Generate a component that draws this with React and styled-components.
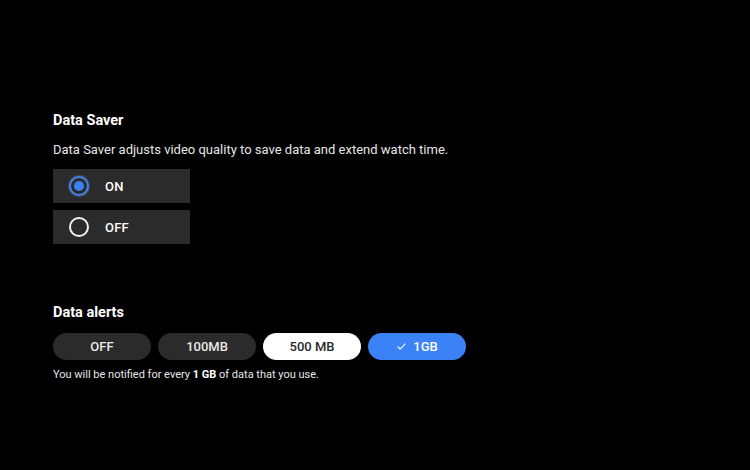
import React, { useState } from "react";
import styled, { createGlobalStyle } from "styled-components";

const Global = createGlobalStyle`
  html, body { margin: 0; padding: 0; background: #000; }
  body { font-family: Roboto, "Noto Sans", Arial, sans-serif; color: #fff; }
`;

const Page = styled.div`
  width: 750px;
  height: 470px;
  background: #000;
  box-sizing: border-box;
  padding: 112px 53px 0;
  display: flex;
  flex-direction: column;
`;

const Section = styled.section`
  display: flex;
  flex-direction: column;
  margin-bottom: ${(p) => p.$after || 0}px;
`;

const Title = styled.h2`
  margin: 0 0 ${(p) => p.$gap ?? 12}px;
  font-size: 14.5px;
  font-weight: 700;
  line-height: 18px;
  color: #fff;
`;

const Description = styled.p`
  margin: 0 0 11px;
  font-size: 13px;
  line-height: 16px;
  color: #e6e6e6;
`;

const RadioList = styled.div`
  display: flex;
  flex-direction: column;
  gap: 7px;
`;

const RadioRow = styled.button`
  width: 137px;
  height: 34px;
  display: flex;
  align-items: center;
  gap: 16px;
  padding: 0 0 0 16px;
  border: none;
  background: #2b2b2b;
  color: #fff;
  font-family: inherit;
  font-size: 13px;
  font-weight: 500;
  letter-spacing: 0.2px;
  cursor: pointer;
  text-align: left;
`;

const RadioDot = styled.span`
  width: 20px;
  height: 20px;
  box-sizing: border-box;
  border-radius: 50%;
  border: 2px solid ${(p) => (p.$on ? "#4a86e8" : "#f2f2f2")};
  display: flex;
  align-items: center;
  justify-content: center;
  box-shadow: ${(p) => (p.$on ? "0 0 0 1px rgba(74,134,232,0.35)" : "none")};
  &::after {
    content: "";
    width: 10px;
    height: 10px;
    border-radius: 50%;
    background: ${(p) => (p.$on ? "#3d82f5" : "transparent")};
  }
`;

const Pills = styled.div`
  display: flex;
  gap: 7px;
`;

const Pill = styled.button`
  width: 98px;
  height: 27px;
  border-radius: 14px;
  border: none;
  display: flex;
  align-items: center;
  justify-content: center;
  gap: 6px;
  font-family: inherit;
  font-size: 13px;
  font-weight: 500;
  cursor: pointer;
  background: ${(p) =>
    p.$variant === "selected" ? "#3b82f6" : p.$variant === "focus" ? "#fff" : "#2b2b2b"};
  color: ${(p) => (p.$variant === "focus" ? "#2a2a2a" : p.$variant === "selected" ? "#fff" : "#e8e8e8")};
`;

const Note = styled.p`
  margin: 8px 0 0;
  font-size: 11px;
  line-height: 14px;
  color: #e6e6e6;
  b { font-weight: 700; color: #fff; }
`;

const Check = () => (
  <svg width="11" height="11" viewBox="0 0 24 24" fill="none" stroke="#fff" strokeWidth="2.4" strokeLinecap="round" strokeLinejoin="round">
    <path d="M4 12.5l5 5L20 6.5" />
  </svg>
);

export default function App() {
  const [saver, setSaver] = useState("on");
  const alerts = [
    { key: "off", label: "OFF" },
    { key: "100", label: "100MB" },
    { key: "500", label: "500 MB", variant: "focus" },
    { key: "1gb", label: "1GB", variant: "selected" },
  ];
  return (
    <>
      <Global />
      <Page>
        <Section $after={60}>
          <Title>Data Saver</Title>
          <Description>Data Saver adjusts video quality to save data and extend watch time.</Description>
          <RadioList>
            <RadioRow onClick={() => setSaver("on")}>
              <RadioDot $on={saver === "on"} />
              ON
            </RadioRow>
            <RadioRow onClick={() => setSaver("off")}>
              <RadioDot $on={saver === "off"} />
              OFF
            </RadioRow>
          </RadioList>
        </Section>
        <Section>
          <Title $gap={11}>Data alerts</Title>
          <Pills>
            {alerts.map((a) => (
              <Pill key={a.key} $variant={a.variant}>
                {a.variant === "selected" && <Check />}
                {a.label}
              </Pill>
            ))}
          </Pills>
          <Note>
            You will be notified for every <b>1 GB</b> of data that you use.
          </Note>
        </Section>
      </Page>
    </>
  );
}
